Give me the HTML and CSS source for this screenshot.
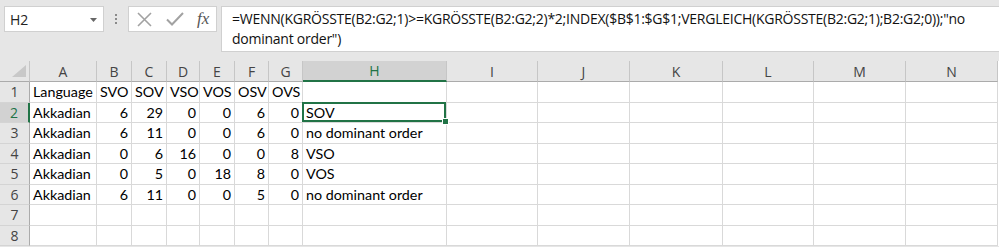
FILE: index.html
```html
<!DOCTYPE html>
<html lang="de">
<head>
    <meta charset="UTF-8">
    <title>Mappe1 - Excel</title>
    <link rel="stylesheet" href="styles.css">
</head>
<body>
    <div class="formula-bar">
        <div class="name-box">
            <span>H2</span>
            <svg class="caret" width="7" height="4" viewBox="0 0 7 4"><path d="M0 0h7L3.5 4z" fill="#666"/></svg>
        </div>
        <div class="grip"><i></i><i></i><i></i></div>
        <div class="fn-buttons">
            <svg width="15" height="15" viewBox="0 0 15 15"><path d="M1 1l13 13M14 1L1 14" stroke="#a2a2a2" stroke-width="1.6" fill="none"/></svg>
            <svg width="18" height="14" viewBox="0 0 18 14"><path d="M1 7.5l5 5L17 1" stroke="#a2a2a2" stroke-width="2" fill="none"/></svg>
            <span class="fx">fx</span>
        </div>
        <div class="formula">=WENN(KGRÖSSTE(B2:G2;1)&gt;=KGRÖSSTE(B2:G2;2)*2;INDEX($B$1:$G$1;VERGLEICH(KGRÖSSTE(B2:G2;1);B2:G2;0));"no<br>dominant order")</div>
    </div>

    <div class="sheet">
        <div class="corner"><svg width="14" height="12" viewBox="0 0 14 12"><path d="M14 0v12H0z" fill="#c8c8c8"/></svg></div>
        <div class="col-head">A</div>
        <div class="col-head">B</div>
        <div class="col-head">C</div>
        <div class="col-head">D</div>
        <div class="col-head">E</div>
        <div class="col-head">F</div>
        <div class="col-head">G</div>
        <div class="col-head active">H</div>
        <div class="col-head">I</div>
        <div class="col-head">J</div>
        <div class="col-head">K</div>
        <div class="col-head">L</div>
        <div class="col-head">M</div>
        <div class="col-head">N</div>

        <div class="row-head">1</div>
        <div class="cell">Language</div>
        <div class="cell">SVO</div>
        <div class="cell">SOV</div>
        <div class="cell">VSO</div>
        <div class="cell">VOS</div>
        <div class="cell">OSV</div>
        <div class="cell">OVS</div>
        <div class="cell"></div>
        <div class="cell"></div><div class="cell"></div><div class="cell"></div><div class="cell"></div><div class="cell"></div><div class="cell"></div>

        <div class="row-head active">2</div>
        <div class="cell">Akkadian</div>
        <div class="cell num">6</div>
        <div class="cell num">29</div>
        <div class="cell num">0</div>
        <div class="cell num">0</div>
        <div class="cell num">6</div>
        <div class="cell num">0</div>
        <div class="cell selected">SOV</div>
        <div class="cell"></div><div class="cell"></div><div class="cell"></div><div class="cell"></div><div class="cell"></div><div class="cell"></div>

        <div class="row-head">3</div>
        <div class="cell">Akkadian</div>
        <div class="cell num">6</div>
        <div class="cell num">11</div>
        <div class="cell num">0</div>
        <div class="cell num">0</div>
        <div class="cell num">6</div>
        <div class="cell num">0</div>
        <div class="cell">no dominant order</div>
        <div class="cell"></div><div class="cell"></div><div class="cell"></div><div class="cell"></div><div class="cell"></div><div class="cell"></div>

        <div class="row-head">4</div>
        <div class="cell">Akkadian</div>
        <div class="cell num">0</div>
        <div class="cell num">6</div>
        <div class="cell num">16</div>
        <div class="cell num">0</div>
        <div class="cell num">0</div>
        <div class="cell num">8</div>
        <div class="cell">VSO</div>
        <div class="cell"></div><div class="cell"></div><div class="cell"></div><div class="cell"></div><div class="cell"></div><div class="cell"></div>

        <div class="row-head">5</div>
        <div class="cell">Akkadian</div>
        <div class="cell num">0</div>
        <div class="cell num">5</div>
        <div class="cell num">0</div>
        <div class="cell num">18</div>
        <div class="cell num">8</div>
        <div class="cell num">0</div>
        <div class="cell">VOS</div>
        <div class="cell"></div><div class="cell"></div><div class="cell"></div><div class="cell"></div><div class="cell"></div><div class="cell"></div>

        <div class="row-head">6</div>
        <div class="cell">Akkadian</div>
        <div class="cell num">6</div>
        <div class="cell num">11</div>
        <div class="cell num">0</div>
        <div class="cell num">0</div>
        <div class="cell num">5</div>
        <div class="cell num">0</div>
        <div class="cell">no dominant order</div>
        <div class="cell"></div><div class="cell"></div><div class="cell"></div><div class="cell"></div><div class="cell"></div><div class="cell"></div>

        <div class="row-head">7</div>
        <div class="cell"></div><div class="cell"></div><div class="cell"></div><div class="cell"></div><div class="cell"></div><div class="cell"></div><div class="cell"></div>
        <div class="cell"></div><div class="cell"></div><div class="cell"></div><div class="cell"></div><div class="cell"></div><div class="cell"></div><div class="cell"></div>

        <div class="row-head">8</div>
        <div class="cell"></div><div class="cell"></div><div class="cell"></div><div class="cell"></div><div class="cell"></div><div class="cell"></div><div class="cell"></div>
        <div class="cell"></div><div class="cell"></div><div class="cell"></div><div class="cell"></div><div class="cell"></div><div class="cell"></div><div class="cell"></div>
    </div>
</body>
</html>
```

FILE: styles.css
```css
body {
    margin: 0;
    background-color: #e6e6e6;
    font-family: Lato, "Liberation Sans", sans-serif;
    color: #000;
    overflow: hidden;
}

/* formula bar */
.formula-bar {
    display: flex;
    align-items: flex-start;
    padding: 6px 0 0 4px;
    height: 55px;
}

.name-box {
    box-sizing: border-box;
    width: 100px;
    height: 26px;
    background-color: #fff;
    border: 1px solid #d0d0d0;
    display: flex;
    align-items: center;
    justify-content: space-between;
    padding: 0 6px 0 5px;
    font-family: "Open Sans", sans-serif;
    font-size: 14px;
    color: #222;
}

.caret {
    margin-top: 1px;
}

.grip {
    width: 24px;
    height: 26px;
    display: flex;
    flex-direction: column;
    align-items: center;
    justify-content: center;
    gap: 2px;
}

.grip i {
    width: 2px;
    height: 2px;
    background-color: #8a8a8a;
}

.fn-buttons {
    box-sizing: border-box;
    width: 89px;
    height: 26px;
    background-color: #fff;
    border: 1px solid #d0d0d0;
    display: flex;
    align-items: center;
    padding-left: 8px;
    gap: 14px;
}

.fx {
    font-family: "Liberation Serif", serif;
    font-style: italic;
    font-size: 17px;
    color: #555;
    margin-left: -1px;
}

.formula {
    box-sizing: border-box;
    flex: 1;
    margin-left: 4px;
    height: 46px;
    background-color: #fff;
    border: 1px solid #d0d0d0;
    border-right: none;
    padding: 2px 0 0 10px;
    font-family: "Open Sans", sans-serif;
    font-size: 14px;
    letter-spacing: -0.25px;
    line-height: 20px;
    color: #111;
    white-space: nowrap;
}

/* grid */
.sheet {
    display: grid;
    grid-template-columns: 30px 67px 35px 35px 33px 35px 34px 34px 144px 91px 92px 93px 91px 92px 92px;
    grid-template-rows: 21px repeat(8, 20.5px);
    background-color: #fff;
    font-size: 14.3px;
}

.corner,
.col-head,
.row-head {
    background-color: #e6e6e6;
    color: #444;
    box-sizing: border-box;
}

.corner {
    display: flex;
    align-items: flex-end;
    justify-content: flex-end;
    padding: 0 3px 4px 0;
    border-right: 1px solid #c6c6c6;
    border-bottom: 1px solid #ababab;
}

.col-head {
    display: flex;
    align-items: center;
    justify-content: center;
    border-right: 1px solid #c6c6c6;
    border-bottom: 1px solid #ababab;
    font-family: "Open Sans", sans-serif;
    font-size: 14px;
}

.col-head.active {
    background-color: #d2d2d2;
    color: #217346;
    border-bottom: 2px solid #217346;
}

.row-head {
    display: flex;
    align-items: center;
    justify-content: center;
    border-right: 1px solid #ababab;
    border-bottom: 1px solid #d4d4d4;
    font-family: "Open Sans", sans-serif;
    font-size: 14px;
}

.row-head.active {
    background-color: #d2d2d2;
    color: #217346;
    border-right: 2px solid #217346;
}

.cell {
    box-sizing: border-box;
    border-right: 1px solid #d9d9d9;
    border-bottom: 1px solid #d9d9d9;
    padding: 0 3px;
    line-height: 20px;
    white-space: nowrap;
}

.num {
    text-align: right;
}

.selected {
    position: relative;
    box-shadow: inset 0 0 0 2px #217346;
    margin: -1px 0 0 -1px;
    padding-left: 4px;
    line-height: 21px;
}

.selected::after {
    content: "";
    position: absolute;
    right: -3px;
    bottom: -3px;
    width: 5px;
    height: 5px;
    background-color: #217346;
    border: 1px solid #fff;
}
```
